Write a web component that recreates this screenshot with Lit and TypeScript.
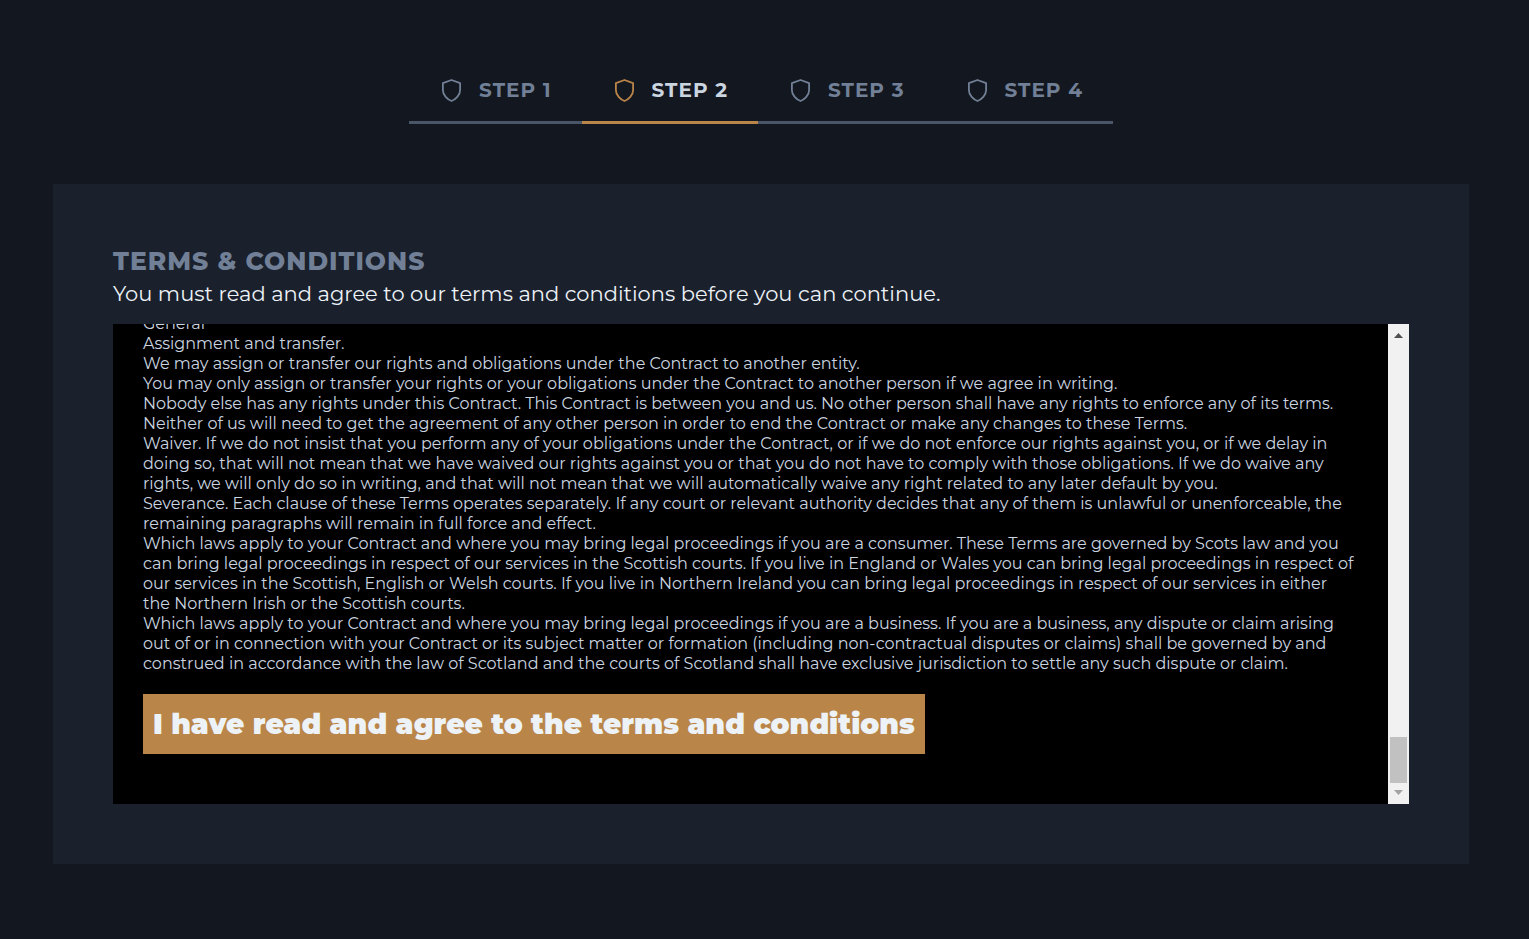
import { LitElement, html, css, svg } from "lit";
import { customElement, state } from "lit/decorators.js";
import { classMap } from "lit/directives/class-map.js";

const STEPS = ["Step 1", "Step 2", "Step 3", "Step 4"];

const TERMS = [
  "General",
  "Assignment and transfer.",
  "We may assign or transfer our rights and obligations under the Contract to another entity.",
  "You may only assign or transfer your rights or your obligations under the Contract to another person if we agree in writing.",
  "Nobody else has any rights under this Contract. This Contract is between you and us. No other person shall have any rights to enforce any of its terms. Neither of us will need to get the agreement of any other person in order to end the Contract or make any changes to these Terms.",
  "Waiver. If we do not insist that you perform any of your obligations under the Contract, or if we do not enforce our rights against you, or if we delay in doing so, that will not mean that we have waived our rights against you or that you do not have to comply with those obligations. If we do waive any rights, we will only do so in writing, and that will not mean that we will automatically waive any right related to any later default by you.",
  "Severance. Each clause of these Terms operates separately. If any court or relevant authority decides that any of them is unlawful or unenforceable, the remaining paragraphs will remain in full force and effect.",
  "Which laws apply to your Contract and where you may bring legal proceedings if you are a consumer. These Terms are governed by Scots law and you can bring legal proceedings in respect of our services in the Scottish courts. If you live in England or Wales you can bring legal proceedings in respect of our services in the Scottish, English or Welsh courts. If you live in Northern Ireland you can bring legal proceedings in respect of our services in either the Northern Irish or the Scottish courts.",
  "Which laws apply to your Contract and where you may bring legal proceedings if you are a business. If you are a business, any dispute or claim arising out of or in connection with your Contract or its subject matter or formation (including non-contractual disputes or claims) shall be governed by and construed in accordance with the law of Scotland and the courts of Scotland shall have exclusive jurisdiction to settle any such dispute or claim.",
];

const shield = svg`<path d="M9.5 1 L18.1 4.1 V11.2 C18.1 16.2 13.6 20.4 9.5 22 C5.4 20.4 0.9 16.2 0.9 11.2 V4.1 Z" />`;

@customElement("app-root")
export class AppRoot extends LitElement {
  @state() private current = 1;

  static styles = css`
    :host {
      display: block;
      box-sizing: border-box;
      min-height: 100vh;
      padding: 60px 60px 60px 53px;
      background: #13171f;
      color: #edf2f7;
      font-family: Gotham, Montserrat, Inter, sans-serif;
    }
    * {
      box-sizing: border-box;
    }
    .steps {
      display: flex;
      justify-content: center;
      margin-bottom: 60px;
    }
    .step {
      display: flex;
      align-items: center;
      gap: 18px;
      height: 64px;
      padding: 0 30px 2px 33px;
      border: 0;
      border-bottom: 3px solid #4a5568;
      background: none;
      color: #718096;
      font: 700 20px/30px Gotham, Montserrat, Inter, sans-serif;
      letter-spacing: 1px;
      text-transform: uppercase;
      cursor: pointer;
    }
    .step.active {
      border-color: #ba8548;
      color: #cbd5e0;
    }
    .shield {
      width: 19px;
      height: 25px;
      fill: none;
      stroke: #718096;
      stroke-width: 1.8;
      stroke-linejoin: round;
    }
    .active .shield {
      stroke: #ba8548;
    }
    .card {
      padding: 60px;
      background: #1a202c;
    }
    .title {
      margin: 0;
      color: #718096;
      font-size: 25px;
      font-weight: 800;
      line-height: 34px;
      letter-spacing: 1px;
      text-transform: uppercase;
    }
    .lead {
      margin: 0 0 14px;
      font-size: 21px;
      line-height: 32px;
    }
    .reader {
      display: flex;
      height: 480px;
      background: #000;
    }
    .text {
      flex: 1;
      overflow-y: auto;
      scrollbar-width: none;
      padding: 30px 30px 50px;
      color: #cbd5e0;
      font-size: 16px;
      line-height: 20px;
    }
    .text p {
      margin: 0;
    }
    .agree {
      display: block;
      height: 60px;
      margin-top: 20px;
      padding: 0 10px;
      border: 0;
      background: #ba8548;
      color: #edf2f7;
      font: 900 28px/60px Gotham, Montserrat, Inter, sans-serif;
      white-space: nowrap;
      cursor: pointer;
    }
    .bar {
      display: flex;
      flex-direction: column;
      align-items: center;
      width: 21px;
      background: #f1f1f1;
    }
    .arrow {
      width: 21px;
      height: 21px;
      fill: #505050;
    }
    .arrow.end {
      fill: #a3a3a3;
    }
    .track {
      display: flex;
      flex: 1;
      align-items: flex-end;
    }
    .thumb {
      width: 17px;
      height: 46px;
      background: #c1c1c1;
    }
  `;

  firstUpdated() {
    const text = this.renderRoot.querySelector(".text")!;
    text.scrollTop = text.scrollHeight;
  }

  render() {
    return html`
      <nav class="steps" aria-label="Progress">
        ${STEPS.map(
          (name, i) => html`<button
            type="button"
            class=${classMap({ step: true, active: i === this.current })}
            @click=${() => (this.current = i)}
          >
            <svg class="shield" viewBox="0 -2 19 25" aria-hidden="true">${shield}</svg>
            <span>${name}</span>
          </button>`
        )}
      </nav>
      <main class="card">
        <h1 class="title">Terms &amp; Conditions</h1>
        <p class="lead">You must read and agree to our terms and conditions before you can continue.</p>
        <div class="reader">
          <div class="text">
            ${TERMS.map((t) => html`<p>${t}</p>`)}
            <button type="button" class="agree">I have read and agree to the terms and conditions</button>
          </div>
          <div class="bar" aria-hidden="true">
            <svg class="arrow" viewBox="0 0 21 21"><path d="M6 14 L10.5 9 L15 14 Z" /></svg>
            <div class="track"><div class="thumb"></div></div>
            <svg class="arrow end" viewBox="0 0 21 21"><path d="M6 7 L10.5 12 L15 7 Z" /></svg>
          </div>
        </div>
      </main>
    `;
  }
}
